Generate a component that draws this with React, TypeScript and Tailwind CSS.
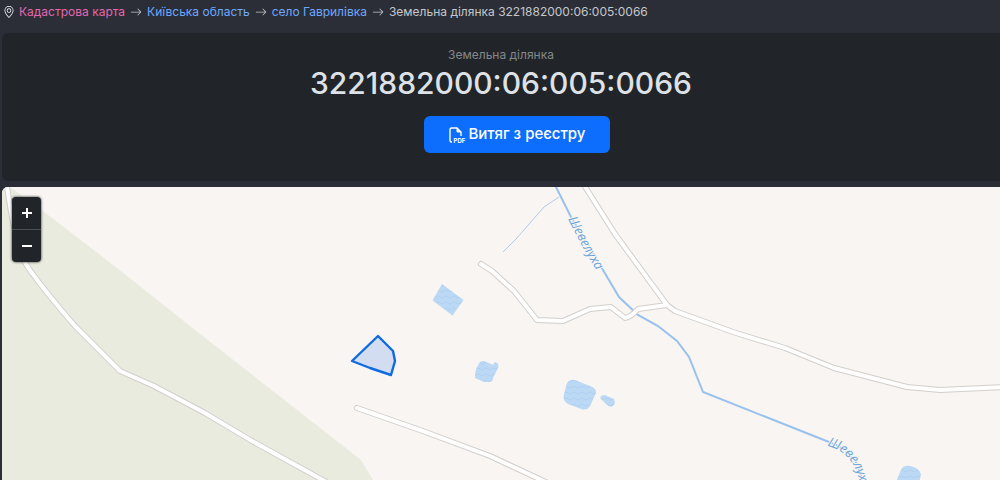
import { BsArrowRight, BsGeoAlt } from "react-icons/bs";

const CADNUM = "3221882000:06:005:0066";

const crumbs = [
  { label: "Кадастрова карта", className: "text-[#e267ae]" },
  { label: "Київська область", className: "text-[#6ea8fe]" },
  { label: "село Гаврилівка", className: "text-[#6ea8fe]" },
];

const roads = [
  "M7 187 L12 218 L21 254 Q26 266 35 277 Q49 296 75 326 L120 371 L154 386 L205 413 L252 441 L330 484",
  "M357 408 L420 430 L490 456 L550 484",
  "M481 264 L492 271 L514 291 L537 320 L563 321 L590 309 L611 307 L625 318 Q631 317 638 309 L667 305",
  "M584 185 L615 234 L667 305 L675 311 L733 332 L785 348 L834 368 L907 387 L940 390 L1004 387",
];

const ponds = [
  "M442 284 L463.500 300 L452.500 315.500 L432.500 300.500 Z",
  "M480 362 Q483 360 486 362 L493 365 Q494 361 497 363 Q500 366 497 370 L493 378 Q493 382 489 382 L484 382 L475 378 Q475 371 477 367 Z",
  "M567 383 Q570 379 575 380 L590 386 Q597 389 596 393 L590 406 Q587 411 581 409 L568 404 Q562 400 564 394 Z",
  "M600 398 Q602 393 607 396 L614 399 Q616 403 613 406 Q610 408 606 404 Z",
  "M896 482 L901 470 Q903 465 910 466 Q918 467 921 474 L919 484 Z",
];

function PdfIcon() {
  return (
    <svg viewBox="0 0 16 16" className="size-4 overflow-visible" aria-hidden="true">
      <path
        d="M4 15 H3.500 Q2 15 2 13.500 V2.500 Q2 1 3.500 1 H9 L13 5 V9"
        fill="none"
        stroke="currentColor"
        strokeWidth="1.4"
      />
      <path d="M8.500 0.500 L13.500 5.500 H10 Q8.500 5.500 8.500 4 Z" fill="currentColor" />
      <text x="5.500" y="15.500" fontSize="6" fontWeight="700" fill="currentColor">PDF</text>
    </svg>
  );
}

function Breadcrumbs() {
  return (
    <nav aria-label="breadcrumb" className="flex h-6 items-center px-[3px] text-xs text-[#c3c7cb]">
      <BsGeoAlt className="mr-1 size-3 shrink-0 text-white" />
      {crumbs.map((item) => (
        <span key={item.label} className="flex items-center whitespace-nowrap">
          <a href="#" className={item.className}>{item.label}</a>
          <BsArrowRight className="mx-[5px] size-3 shrink-0" />
        </span>
      ))}
      <span className="whitespace-nowrap">Земельна ділянка {CADNUM}</span>
    </nav>
  );
}

function ParcelHeader() {
  return (
    <header className="ml-0.5 mt-[9px] flex flex-col items-center rounded-l-md bg-[#212529] pt-3 pb-7">
      <p className="text-xs leading-5 text-[#85888b]">Земельна ділянка</p>
      <h1 className="text-[30px] leading-9 font-medium text-[#dee2e6]">{CADNUM}</h1>
      <button
        type="button"
        className="mt-[15px] ml-8 flex h-[37px] items-center gap-1 rounded-md bg-[#0d6efd] px-6 text-[15px] font-medium text-white"
      >
        <PdfIcon />
        Витяг з реєстру
      </button>
    </header>
  );
}

function MapView() {
  return (
    <section className="relative ml-0.5 mt-1.5 min-h-0 flex-1 overflow-hidden rounded-tl-md bg-[#f8f5f2]">
      <svg
        viewBox="2 187 998 293"
        preserveAspectRatio="xMinYMin slice"
        className="block size-full"
        role="img"
        aria-label="Карта"
      >
        <defs>
          <pattern id="waves" width="8" height="6" patternUnits="userSpaceOnUse">
            <rect width="8" height="6" fill="#bbd9f4" />
            <path d="M0 3 Q2 5 4 3 T8 3" fill="none" stroke="#adcbed" strokeWidth="0.8" />
          </pattern>
          <path id="river-upper" d="M568 219 L583 248 L606 286" />
          <path id="river-lower" d="M827 446 Q845 450 854 466 Q861 480 864 510" />
        </defs>

        <path d="M2 187 H10 L43 211 L117 268 L195 330 L250 373 L361 460 L373 480 V500 H2 Z" fill="#e9ebdf" />

        <path d="M559 197 L544 207 L516 239 L503 252" fill="none" stroke="#b0cbed" strokeWidth="1" />
        <path
          d="M555 185 L571 217 L603 270 L619 297 L638 315 L658 326 L677 341 L689 357 L703 392 L829 442 Q849 449 858 466 L864 486"
          fill="none"
          stroke="#98c1ed"
          strokeWidth="2"
        />

        <g fill="none" strokeLinecap="round" strokeLinejoin="round">
          {roads.map((d) => (
            <path key={d} d={d} stroke="#d2cfcc" strokeWidth="6" />
          ))}
          {roads.map((d) => (
            <path key={d} d={d} stroke="#fefefe" strokeWidth="4" />
          ))}
        </g>

        {ponds.map((d) => (
          <path key={d} d={d} fill="url(#waves)" />
        ))}

        <g
          className="font-['Open_Sans',sans-serif] text-[13px] italic"
          fill="#6ba3db"
          stroke="#f8f5f2"
          strokeWidth="2"
          paintOrder="stroke"
        >
          <text>
            <textPath href="#river-upper">Шевелуха</textPath>
          </text>
          <text>
            <textPath href="#river-lower">Шевелуха</textPath>
          </text>
        </g>

        <path
          d="M378 336 L393 351 L395 361 L391 375 L370 368 L352 361 Z"
          fill="#3d7bf5"
          fillOpacity="0.2"
          stroke="#0f6be0"
          strokeWidth="2.4"
          strokeLinejoin="round"
        />
      </svg>

      <div className="absolute top-2.5 left-2.5 flex w-[29px] flex-col rounded-sm bg-[#212529] text-white shadow-[0_0_2px_1px_rgba(0,0,0,0.4)]">
        <button type="button" aria-label="Збільшити" className="flex h-[33px] items-center justify-center border-b border-[#495057]">
          <svg viewBox="0 0 10 10" className="size-2.5" fill="none" stroke="currentColor" strokeWidth="2">
            <path d="M0 5 H10 M5 0 V10" />
          </svg>
        </button>
        <button type="button" aria-label="Зменшити" className="flex h-8 items-center justify-center">
          <svg viewBox="0 0 10 10" className="size-2.5" fill="none" stroke="currentColor" strokeWidth="2">
            <path d="M0 5 H10" />
          </svg>
        </button>
      </div>
    </section>
  );
}

export default function App() {
  return (
    <main className="flex h-screen flex-col bg-[#2b2e36] font-['Inter',sans-serif]">
      <Breadcrumbs />
      <ParcelHeader />
      <MapView />
    </main>
  );
}
